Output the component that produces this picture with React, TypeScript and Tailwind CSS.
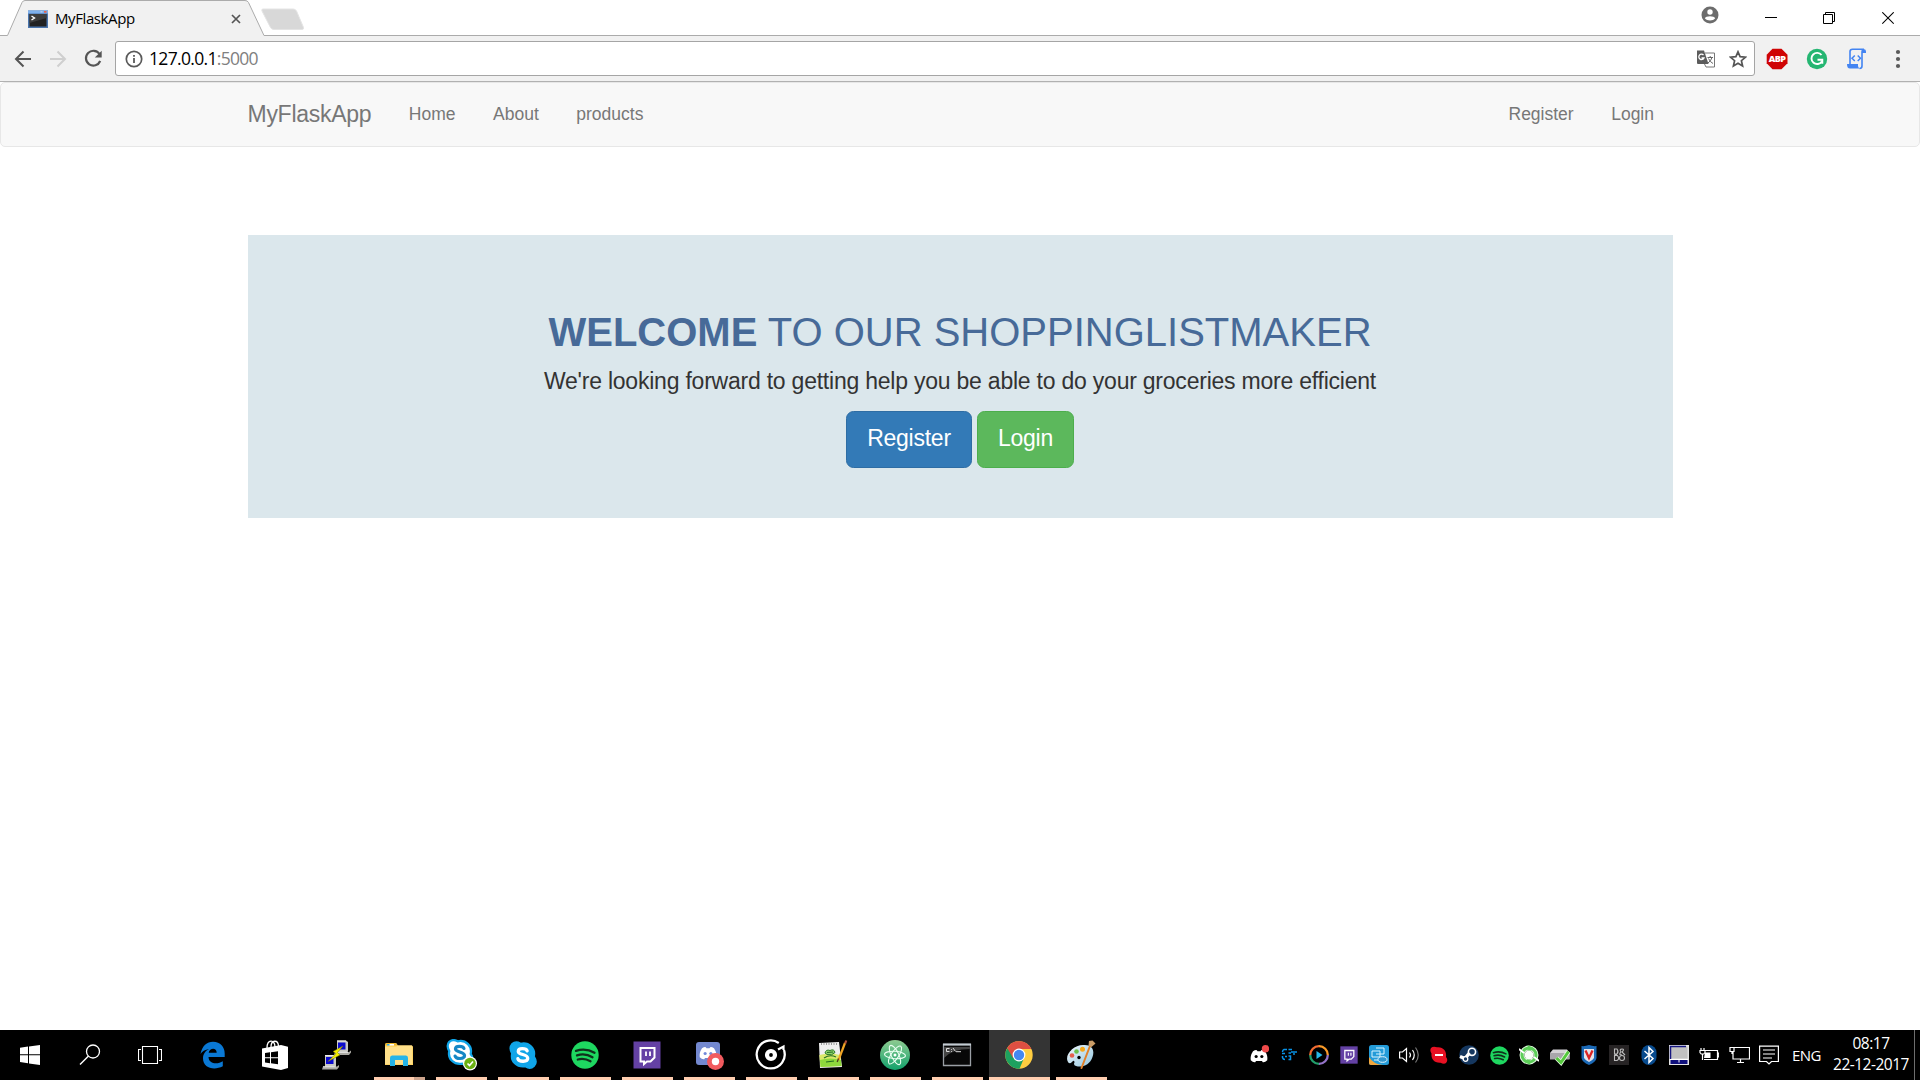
import React from "react";

type IconProps = { size?: number; box?: string; children: React.ReactNode };

function Icon({ size = 30, box, children }: IconProps) {
  return (
    <svg width={size} height={size} viewBox={box ?? `0 0 ${size} ${size}`} fill="none" className="block shrink-0">
      {children}
    </svg>
  );
}

/* ---------- Browser chrome ---------- */

function TabStrip() {
  return (
    <div className="relative flex h-9 items-start bg-white">
      <svg width="1920" height="36" className="absolute inset-0">
        <path d="M0 35.5H7.5L22 2.5Q23 .5 25 .5H245Q247.500 .5 248.500 2.500L264 35.500H1920V36H0Z" fill="#f1f1f1" />
        <path d="M0 35.500H7.500L22 2.500Q23 .5 25 .5H245Q247.500 .5 248.500 2.500L264 35.500H1920" fill="none" stroke="#ababab" />
        <path d="M263 9H293Q295.500 9 296.500 11L303.500 27.500Q304 29.500 302 29.500H274Q271.500 29.500 270.500 27.500L262 11Q261.300 9 263 9Z" fill="#d8d8d8" stroke="#e4e4e4" />
      </svg>
      <div className="relative ml-7 flex h-9 w-[215px] items-center">
        <div className="pt-[3px]">
          <Icon size={20}>
            <rect y=".5" width="20" height="17.500" fill="#4a75ad" />
            <rect y=".5" width="20" height="3" fill="#7eb0ec" />
            <rect x="16" y="1" width="2.500" height="1.700" fill="#e4614f" />
            <rect x="12.500" y="1" width="2" height="1.500" fill="#b5cdf0" />
            <rect x="1.500" y="4" width="17" height="12.500" fill="#222" />
            <path d="M1.500 4h17v4L1.500 13z" fill="#3d3d3d" />
            <path d="M3.500 6l3 2-3 2" stroke="#fff" strokeWidth="1.400" />
          </Icon>
        </div>
        <span className="ml-[7px] w-[80px] whitespace-nowrap font-['Open_Sans',sans-serif] text-[15px] leading-5 tracking-[-0.4px] text-black">MyFlaskApp</span>
        <svg width="10" height="10" className="ml-24 mt-0.5">
          <path d="M1 1l8 8M9 1L1 9" stroke="#555" strokeWidth="1.700" />
        </svg>
      </div>
      <div className="relative ml-auto flex h-9 items-center">
        <div className="mr-[46px] -mt-[6px]">
          <Icon size={18}>
            <circle cx="9" cy="9" r="8.500" fill="#6c6c6c" />
            <circle cx="9" cy="6" r="2.700" fill="#fff" />
            <path d="M3.800 12.300C4.500 9.600 13.500 9.600 14.200 12.300C12 15.300 6 15.300 3.800 12.300Z" fill="#fff" />
          </Icon>
        </div>
        <svg width="12" height="13" className="mr-[46px]"><path d="M0 5.500h12" stroke="#000" /></svg>
        <svg width="12" height="13" className="mr-[47px]">
          <path d="M.5 2.500h9v9h-9zM2.500 2.500v-2h9v9h-2" stroke="#000" fill="none" />
        </svg>
        <svg width="12" height="13" className="mr-[26px]"><path d="M.3 .3l11.400 11.400M11.700 .3L.3 11.700" stroke="#000" strokeWidth="1.100" /></svg>
      </div>
    </div>
  );
}

function Toolbar() {
  return (
    <div className="flex h-[46px] items-center border-b border-[#b1b1b1] bg-[#f1f1f1]">
      <svg width="115" height="45" className="shrink-0" fill="none" strokeWidth="2">
        <path d="M31 23H16M23.500 15.500L16 23L23.500 30.500" stroke="#555" />
        <path d="M50 23H65M57.500 15.500L65 23L57.500 30.500" stroke="#cfcfcf" />
        <path d="M99.500 18A7.400 7.400 0 1 0 100.200 25" stroke="#555" strokeWidth="2.200" />
        <path d="M101.700 14.800V21.600H94.800Z" fill="#555" />
      </svg>
      <div className="flex h-[35px] w-[1640px] shrink-0 items-center rounded-[3px] border border-[#a5a5a5] bg-white">
        <div className="ml-[8.500px]">
          <Icon size={18}>
            <circle cx="9" cy="9" r="7.700" stroke="#5a5a5a" strokeWidth="1.700" />
            <path d="M9 8v5M9 5v1.800" stroke="#5a5a5a" strokeWidth="1.800" />
          </Icon>
        </div>
        <span className="ml-[6.500px] whitespace-nowrap pb-0.5 font-['Open_Sans',sans-serif] text-[17.500px] leading-6 tracking-[-0.680px] text-black">
          127.0.0.1<span className="text-[#808080]">:5000</span>
        </span>
        <div className="ml-auto mr-[13px]">
          <Icon size={20}>
            <path d="M9 4h9.500v14H10L8 14" stroke="#777" strokeWidth="1" fill="#fff" />
            <path d="M1 1.500h7L12.500 15H2q-1 0-1-1Z" fill="#5c5c5c" />
            <path d="M7.500 6A2.700 2.700 0 1 0 8 9H5.500" stroke="#fff" strokeWidth="1.300" />
            <path d="M11.500 8.500H17M14.200 7v1.500M16 8.500Q15 12 12 14M12.500 9.500Q14 13 17 14.500" stroke="#666" />
          </Icon>
        </div>
        <div className="mr-[7px]">
          <Icon size={18}>
            <path d="M9 1.800L11.100 6.700L16.400 7.200L12.400 10.700L13.600 16L9 13.200L4.400 16L5.600 10.700L1.600 7.200L6.900 6.700Z" stroke="#555" strokeWidth="1.700" />
          </Icon>
        </div>
      </div>
      <div className="ml-[11px] flex items-center">
        <div className="grid">
          <div className="col-start-1 row-start-1">
            <Icon size={22}>
              <path d="M6.500 .7h9L21.500 6.700v8.500l-6 6h-9L.7 15.200V6.700Z" fill="#cf0404" />
            </Icon>
          </div>
          <span className="col-start-1 row-start-1 place-self-center font-['Open_Sans',sans-serif] text-[9px] font-extrabold leading-[14px] tracking-[-0.6px] text-white">ABP</span>
        </div>
        <div className="ml-[18px]">
          <Icon size={22}>
            <circle cx="11" cy="11" r="10.200" fill="#25b672" />
            <path d="M15.500 7A5.600 5.600 0 1 0 15.800 13.500M11.500 11.800h4.800v4" stroke="#fff" strokeWidth="1.900" />
          </Icon>
        </div>
        <div className="ml-[18px]">
          <Icon size={22}>
            <path d="M4 16V3.500Q4 1.200 6.500 1.200H18Q16 1.600 16 4V18Q16 20.500 13.500 20.500" stroke="#4384f2" strokeWidth="1.600" />
            <path d="M16 5h4V3.500Q20 1.200 18 1.200Q16 1.500 16 5ZM1 16H12Q11.500 20.500 15 20.500H4Q1 20.500 1 16Z" fill="#4384f2" />
            <path d="M8.800 7.500L6 10.200L8.800 13M11.700 7.500L14.500 10.200L11.700 13" stroke="#4384f2" strokeWidth="1.500" />
          </Icon>
        </div>
        <svg width="6" height="20" className="ml-[26.500px]" fill="#5a5a5a">
          <circle cx="3" cy="3" r="2.100" /><circle cx="3" cy="10" r="2.100" /><circle cx="3" cy="17" r="2.100" />
        </svg>
      </div>
    </div>
  );
}

/* ---------- Page ---------- */

function Page() {
  return (
    <main className="flex-1 bg-white font-['Liberation_Sans',Arial,sans-serif]">
      <nav className="flex h-[65px] items-center rounded-[5px] border border-[#e7e7e7] bg-[#f8f8f8] pl-[246.500px] pr-[265px] text-[17.500px] leading-[25px] text-[#777]">
        <a className="text-[23px] tracking-[-0.270px]">MyFlaskApp</a>
        <a className="ml-[37.500px]">Home</a>
        <a className="ml-[37.500px]">About</a>
        <a className="ml-[37.500px]">products</a>
        <a className="ml-auto">Register</a>
        <a className="ml-[37.500px]">Login</a>
      </nav>
      <section className="mx-auto mt-[88px] flex h-[283px] w-[1425px] flex-col items-center bg-[#dbe7ec] pt-[73px]">
        <h1 className="whitespace-nowrap text-[40px] leading-[48px] text-[#476a98]">
          <strong className="font-bold">WELCOME</strong> TO OUR SHOPPINGLISTMAKER
        </h1>
        <p className="mt-[9px] whitespace-nowrap text-[23px] leading-8 tracking-[-0.225px] text-[#333]">
          We're looking forward to getting help you be able to do your groceries more efficient
        </p>
        <div className="mt-[14px] flex gap-[5px] text-[23px] tracking-[-0.250px] text-white">
          <button className="h-[57px] w-[126px] rounded-[7.500px] border border-[#2e6da4] bg-[#337ab7] pb-[3px]">Register</button>
          <button className="h-[57px] w-[97px] rounded-[7.500px] border border-[#4cae4c] bg-[#5cb85c] pb-[3px]">Login</button>
        </div>
      </section>
    </main>
  );
}

/* ---------- Taskbar icons ---------- */

const windows = (
  <Icon size={20}>
    <path d="M0 2.800L8 1.600V9.300H0ZM9 1.500L20 0V9.300H9ZM0 10.300H8V18.200L0 17.100ZM9 10.300H20V20L9 18.400Z" fill="#fff" />
  </Icon>
);
const search = (
  <Icon size={22}>
    <circle cx="14" cy="7.500" r="6.500" stroke="#fff" strokeWidth="1.300" />
    <path d="M9.500 12L1 20.500" stroke="#fff" strokeWidth="1.500" />
  </Icon>
);
const taskView = (
  <Icon size={24}>
    <path d="M4.500 3.500h15v17h-15zM3 6.500H.5v11H3M21 6.500h2.500v11H21" stroke="#fff" strokeWidth="1.100" />
  </Icon>
);
const edge = (
  <Icon size={28}>
    <path d="M1.500 13C3 5 8 .8 14 .8C21.500 .8 25.700 6 25.700 12.500V16H9.500C9.800 23.500 19 23.500 23.800 20.300V25.300C15 29.800 4 27 4 17.500C4 13 6.500 9.800 10.200 8C6 8.500 3 10.500 1.500 13ZM9.700 11.800H17.700C17.800 6.300 10.500 6.700 9.700 11.800Z" fill="#0a78d4" fillRule="evenodd" />
  </Icon>
);
const store = (
  <Icon size={30}>
    <path d="M7 8C7 -1 15 -1 15 7M11 7C11 -.5 18 -.5 18.500 6" stroke="#fff" strokeWidth="1.300" />
    <path d="M2 8.500L21 5V30L2 26.500Z" fill="#fff" />
    <path d="M21 5L28 6.800V28L21 30Z" fill="#fff" />
    <path d="M5 13l5-.7v5H5zM11 12.200l7-1v6.100h-7zM5 18.300h5v4.900l-5-.7zM11 18.300h7v6l-7-1z" fill="#000" />
  </Icon>
);

function Computer({ x, y }: { x: number; y: number }) {
  return (
    <g transform={`translate(${x} ${y})`}>
      <path d="M3 0H12L14 1.500V11L12 12H3Z" fill="#c9c9c3" />
      <path d="M4 2h7.500v7H4z" fill="#0b0bd0" />
      <path d="M1 11.500H15L17 10V12L15 14.500H0Z" fill="#aaa9a3" />
      <path d="M1 11.800H14M3 .5H12" stroke="#eee" />
    </g>
  );
}
const putty = (
  <Icon size={30}>
    <Computer x={12} y={0.5} />
    <Computer x={0} y={15} />
    <path d="M21 6L11 11.500L14 13.500L6 21.500L18 15L15.500 12.500Z" fill="#f5ef00" stroke="#77740a" strokeWidth=".5" />
  </Icon>
);
const explorer = (
  <Icon size={30}>
    <path d="M1 5Q1 3 3 3H12L14 5.500H27.500Q29 5.500 29 7V25H1Z" fill="#ffd566" />
    <path d="M1 4.500Q1 3 3 3H12L13.500 5.500H1Z" fill="#eab42b" />
    <path d="M3 4.800h7" stroke="#fff" strokeWidth="1.600" /><path d="M3 4.800h2.500" stroke="#35aadd" strokeWidth="1.600" />
    <path d="M1 7H12L14 5.500H28V24H1Z" fill="#ffe08a" />
    <path d="M6 26V18Q6 15.500 8 15.500H22Q24 15.500 24 18V26H19V20H11V26Z" fill="#24b4e8" />
  </Icon>
);

function Skype({ inverted }: { inverted?: boolean }) {
  return (
    <>
      <path d="M3 3Q7 -.5 12 2.500C21 .5 28 8 26 16Q30 22 26 26Q22 30 17 26.500C8 28 1 21 3 13Q-.5 7 3 3Z" fill={inverted ? "#fff" : "#10a5e8"} stroke="#10a5e8" strokeWidth={inverted ? 2.4 : 1.6} />
      <path d="M18.800 10.200C17.800 7.400 9.600 6.800 9.600 10.800C9.600 14.600 19.400 13.400 19.400 17.800C19.400 22 10.300 21.900 9.200 18.300" stroke={inverted ? "#1687c5" : "#fff"} strokeWidth="3.400" strokeLinecap="round" />
    </>
  );
}
const skypeOnline = (
  <Icon size={32}>
    <g transform="translate(1.500 0) scale(.93)"><Skype inverted /></g>
    <circle cx="25" cy="24.500" r="7" fill="#fff" />
    <circle cx="25" cy="24.500" r="5.800" fill="#6bb113" />
    <path d="M22.500 24.500l2 2 3.500-4" stroke="#fff" strokeWidth="1.700" />
  </Icon>
);
const skype = <Icon size={28} box="0 0 29 29"><Skype /></Icon>;

function Spotify() {
  return (
    <>
      <circle cx="14" cy="14" r="13.700" fill="#1ed760" />
      <path d="M5 9.800C11 8 18 8.600 23.500 11.700M6 14.300C11 12.800 17 13.500 21.500 16.200M6.800 18.500C11 17.400 15.500 18 19.500 20.300" stroke="#10301c" strokeWidth="2.300" strokeLinecap="round" />
    </>
  );
}
const spotify = <Icon size={28}><Spotify /></Icon>;

function Twitch() {
  return (
    <>
      <path d="M.5 .5h27v27H.5z" fill="#6441a4" />
      <path d="M7.500 7H21.500V16.500L17.500 20.500H14L11 23V20.500H7.500Z" stroke="#fff" strokeWidth="2" />
      <path d="M13 10.500v4.500M17 10.500v4.500" stroke="#fff" strokeWidth="1.800" />
    </>
  );
}
const twitch = <Icon size={28}><Twitch /></Icon>;

function DiscordFace({ fill, eye }: { fill: string; eye: string }) {
  return (
    <>
      <path d="M4 3Q7 1 9 1.500L10 3H14L15 1.500Q17 1 20 3Q24 9 23 15Q20 18 17 17.500L16 16H8L7 17.500Q4 18 1 15Q0 9 4 3Z" fill={fill} />
      <circle cx="8.200" cy="10" r="2.100" fill={eye} /><circle cx="15.800" cy="10" r="2.100" fill={eye} />
    </>
  );
}
const discord = (
  <Icon size={30}>
    <rect x="2" y="2" width="24" height="23" rx="3" fill="#7388cf" />
    <g transform="translate(5 6) scale(.75)"><DiscordFace fill="#fff" eye="#7289da" /></g>
    <circle cx="21.500" cy="21.500" r="8.500" fill="#f15a5e" />
    <circle cx="21.500" cy="21.500" r="3.700" fill="#fff" />
  </Icon>
);
const groove = (
  <Icon size={32}>
    <path d="M23.800 4A14 14 0 1 0 29 11" stroke="#fff" strokeWidth="2.300" />
    <circle cx="16" cy="16" r="4" stroke="#fff" strokeWidth="4.200" />
    <path d="M23 10.500L28.500 7.500V11" stroke="#fff" strokeWidth="2.200" />
  </Icon>
);
const notepadPlus = (
  <Icon size={30}>
    <path d="M1 3L21 2L24 27L2 28Z" fill="#eee" />
    <path d="M1.300 15Q12 12 22 15L23.500 26L2.500 27Z" fill="#d9e86a" />
    <path d="M2 20Q12 17 23 20L23.500 26L2.500 27Z" fill="#8ed83c" />
    <path d="M3 4h17" stroke="#999" strokeWidth="2" strokeDasharray="1 1.500" />
    <path d="M7 13Q8 9 12 10.500Q16 8.500 17 12.500Q14 16 9 14.500Z" stroke="#2d7a2a" fill="#8fd168" />
    <path d="M9 12.500l6-.5M6 18q6-4 12-1M8 22l8-1" stroke="#226d22" strokeWidth="1.100" />
    <path d="M27 3L20.500 20" stroke="#f0a424" strokeWidth="2.200" /><path d="M28.200 .5l-1 3" stroke="#b5523b" strokeWidth="2.200" /><path d="M20.500 18.500l-1.300 3.500" stroke="#503820" strokeWidth="1.300" />
  </Icon>
);
const atom = (
  <Icon size={32}>
    <defs><linearGradient id="atomFill" x1="0" y1="0" x2="0" y2="1"><stop stopColor="#8ecb91" /><stop offset="1" stopColor="#12a26b" /></linearGradient></defs>
    <circle cx="16" cy="16" r="15" fill="url(#atomFill)" />
    <g stroke="#eafff2" strokeWidth="1.100">
      <ellipse cx="16" cy="16" rx="10.500" ry="3.700" transform="rotate(4 16 16)" />
      <ellipse cx="16" cy="16" rx="10.500" ry="3.700" transform="rotate(64 16 16)" />
      <ellipse cx="16" cy="16" rx="10.500" ry="3.700" transform="rotate(124 16 16)" />
    </g>
    <circle cx="16" cy="16" r="1.500" fill="#fff" />
  </Icon>
);
const terminal = (
  <Icon size={30}>
    <path d="M1.500 4.500h27v21h-27z" fill="#080808" stroke="#9a9fa5" strokeWidth="1.300" />
    <path d="M2 7H28V9Q10 9 2 18Z" fill="#444" />
    <path d="M1 4.500H29" stroke="#c3cbd2" strokeWidth="2" />
    <path d="M7.500 8.500H4.500v3h3M9.500 9v.8M9.500 11v.8M11 8l2.500 3.500M14 11.700h5" stroke="#ddd" />
  </Icon>
);
const chrome = (
  <Icon size={28}>
    <circle cx="14" cy="14" r="13.700" fill="#ffcd40" />
    <path d="M14 14L2.200 7.200A13.700 13.700 0 0 0 14.500 27.700L19 17Z" fill="#1da15f" />
    <path d="M2.200 7A13.700 13.700 0 0 1 26.300 8H14L8 17Z" fill="#dd4f42" />
    <circle cx="14" cy="14" r="6.400" fill="#fff" /><circle cx="14" cy="14" r="5.200" fill="#4688f1" />
  </Icon>
);
const paint = (
  <Icon size={30}>
    <defs><linearGradient id="paletteFill" x1="0" y1="0" x2="1" y2="1"><stop stopColor="#f1f8fc" /><stop offset="1" stopColor="#93c6df" /></linearGradient></defs>
    <path d="M1.500 21C-1 14 8 5 17 5C26 4 29 10 26.500 17C24 25 16 28 10 26Q7 25 8.500 22.500Q8.500 19.500 6 22Q3 25 1.500 21Z" fill="url(#paletteFill)" />
    <circle cx="6" cy="15.500" r="2.300" fill="#e5604e" /><circle cx="10.500" cy="11.500" r="2.300" fill="#6cc24c" /><circle cx="16.500" cy="9.300" r="2.500" fill="#f7a91b" /><circle cx="13" cy="17.500" r="1.700" fill="#000" />
    <path d="M24 6L15.500 28" stroke="#e28028" strokeWidth="2" strokeLinecap="round" />
    <path d="M23 1L26.500 .5L29.500 3.500L25.500 7L22.500 5.500Z" fill="#c99c67" />
  </Icon>
);

type Task = { name: string; icon: React.ReactNode; bar?: "open" | "stacked" | "active" };

const tasks: Task[] = [
  { name: "Edge", icon: edge },
  { name: "Store", icon: store },
  { name: "PuTTY", icon: putty },
  { name: "File Explorer", icon: explorer, bar: "stacked" },
  { name: "Skype for desktop", icon: skypeOnline, bar: "open" },
  { name: "Skype", icon: skype, bar: "open" },
  { name: "Spotify", icon: spotify, bar: "open" },
  { name: "Twitch", icon: twitch, bar: "open" },
  { name: "Discord", icon: discord, bar: "open" },
  { name: "Groove", icon: groove, bar: "open" },
  { name: "Notepad++", icon: notepadPlus, bar: "open" },
  { name: "Atom", icon: atom, bar: "open" },
  { name: "Command Prompt", icon: terminal, bar: "open" },
  { name: "Chrome", icon: chrome, bar: "active" },
  { name: "Paint", icon: paint, bar: "open" },
];

/* ---------- Notification area ---------- */

const tray: React.ReactNode[] = [
  <Icon size={20}><g transform="translate(1 4) scale(.75)"><DiscordFace fill="#fff" eye="#000" /></g><circle cx="16.500" cy="3.700" r="3.700" fill="#f04a4a" /></Icon>,
  <Icon size={20}><path d="M8 4.500H5Q3.500 5 3.500 7M3 8.500H6M3.500 11V12.500Q4 14.500 6 14.500M6 11.500H8M9.500 4.500H13M9.500 8H12M9.500 11h2v3.500h-2M12 7H18M14 9H16" stroke="#0892e6" strokeWidth="1.500" /></Icon>,
  <Icon size={20}>
    <path d="M10 1.200A8.800 8.800 0 0 1 18.800 10" stroke="#fa9a28" strokeWidth="2.300" /><path d="M18.800 10A8.800 8.800 0 0 1 10 18.800" stroke="#9473c8" strokeWidth="2.300" /><path d="M10 18.800A8.800 8.800 0 0 1 1.200 10" stroke="#219d6a" strokeWidth="2.300" /><path d="M1.200 10A8.800 8.800 0 0 1 10 1.200" stroke="#f26c31" strokeWidth="2.300" />
    <path d="M7.500 6L13.500 10L7.500 14Z" fill="#27b9e8" />
  </Icon>,
  <Icon size={18} box="0 0 28 28"><Twitch /></Icon>,
  <Icon size={20}><rect width="20" height="20" rx="2.500" fill="#239bd8" /><path d="M0 12Q4 19 14 20H2Q0 20 0 18Z" fill="#f3a63b" /><path d="M3 6h8v6H3zM7 3h8v6H7M5 15h5" stroke="#d9f4ff" /><ellipse cx="13.500" cy="14.500" rx="4.500" ry="2.800" stroke="#e5f6ff" fill="#3298cf" /></Icon>,
  <Icon size={21}><path d="M.6 7H3.500L7.500 3.500V16.500L3.500 13H.6Z" stroke="#fff" strokeWidth="1.200" /><path d="M10.500 7.500Q12.500 10 10.500 12.500M13.500 5Q17 10 13.500 15" stroke="#fff" strokeWidth="1.200" /><path d="M16.500 2.500Q22 10 16.500 17.500" stroke="#777" strokeWidth="1.200" /></Icon>,
  <Icon size={20}><path d="M2 3Q4 .8 8 2.200C14 1.500 18 6 17 12Q19.500 15 17 18Q15 19.500 11.500 17.700C5 18 2 14 2.500 8.500Q.5 5.500 2 3Z" fill="#e81123" /><path d="M6 10h8" stroke="#fff" strokeWidth="2" /></Icon>,
  <Icon size={20}><circle cx="10" cy="10" r="9.800" fill="#15375f" /><path d="M1 11.500L6 13.500L10.500 8" stroke="#fff" strokeWidth="3.500" /><circle cx="13" cy="6.800" r="3.600" stroke="#fff" strokeWidth="1.600" /><circle cx="6.500" cy="14" r="2.300" stroke="#fff" strokeWidth="1.300" fill="#15375f" /></Icon>,
  <Icon size={19} box="0 0 28 28"><Spotify /></Icon>,
  <Icon size={20}>
    <circle cx="10" cy="10" r="7" stroke="#dff8dd" strokeWidth="5" />
    <circle cx="10" cy="10" r="7" stroke="#5cce58" strokeWidth="3" />
    <path d="M8.500 0L15 3.500L9.500 7ZM11.500 20L5 16.500L10.500 13Z" fill="#5cce58" />
    <path d="M0 4L5 8M20 16L15 12" stroke="#fff" strokeWidth="1.800" />
    <circle cx="10" cy="10" r="4.500" fill="#f7fff7" />
  </Icon>,
  <Icon size={21}><path d="M4 4.500H18L20.500 8V14H1V8Z" fill="#d6d3d7" /><path d="M1 8H20.500V14.500H1Z" fill="#a9a6ab" /><path d="M7.500 13L12 17.500L19.500 6.500" stroke="#e9ffe4" strokeWidth="4.500" /><path d="M7.500 13L12 17.500L19.500 6.500" stroke="#55c83d" strokeWidth="3" /></Icon>,
  <Icon size={20}><path d="M2.500 1Q6 1.500 10 0Q14 1.500 17.500 1V13Q17 17 10 20Q3 17 2.500 13Z" fill="#1b69b6" /><path d="M5 4H15V13Q14 15 10 17Q6 15 5 13Z" fill="#e2e4ea" /><path d="M6.500 5.500L10 13L13.500 5.500" stroke="#db2425" strokeWidth="2.300" /></Icon>,
  <Icon size={20}><path d="M0 0h20v20H0z" fill="#272425" /><path d="M5.500 4v5H8Q10 6.500 8 4ZM5.500 10.500v5H8Q11 14 8.500 10.500ZM5.500 10H8M12 7q-2-3 1-3t0 3l3 3m-4-3q-3 3 1 3" stroke="#bbb" strokeWidth="1.100" /><circle cx="13" cy="13" r="2.500" stroke="#bbb" strokeWidth="1.100" /></Icon>,
  <Icon size={20}><rect x="2.500" y="0" width="15" height="20" rx="7.500" fill="#084b8e" /><path d="M5.500 6L14 13.500L10 17.500V2.500L14 6.500L5.500 14" stroke="#fff" strokeWidth="1.500" /></Icon>,
  <Icon size={20}><path d="M0 0h20v20H0z" fill="#e4e4e4" /><path d="M1.500 1.500h17v12h-17z" fill="#c1c1c1" /><path d="M1.500 14V1.500H17" stroke="#161681" strokeWidth="1.500" /><path d="M1.500 15h17v4h-17z" fill="#10107c" /><path d="M1 14.500h18M10 14.500v3" stroke="#fff" /></Icon>,
  <Icon size={20}><path d="M6.500 5.500H18.500V14.500H5M18.500 8h1.300v4h-1.300M2 3v2.500M5 3v2.500M1 5.500h5v2L4.800 9H2.200L1 7.500ZM3.500 9v6" stroke="#fff" strokeWidth="1.200" /><path d="M6 7.500h5.500v5.500H5Z" fill="#fff" /></Icon>,
  <Icon size={21}><path d="M5 2.500H20.500V14H4V7M11.500 14v3M8 17.500h7M1 2.500h4v4H1ZM3 6.500V9" stroke="#fff" strokeWidth="1.200" /></Icon>,
  <Icon size={20}><path d="M.6 1.100H19.400V16.500H12.500L10 19L7.500 16.500H.6Z" stroke="#fff" strokeWidth="1.200" /><path d="M4 5h12M4 9h12M4 13h9" stroke="#fff" strokeWidth="1.200" /></Icon>,
];

function Taskbar() {
  return (
    <footer className="flex h-[50px] shrink-0 bg-black font-['Open_Sans',sans-serif] text-white">
      <div className="flex w-[60px] items-center justify-center">{windows}</div>
      <div className="flex w-[60px] items-center justify-center">{search}</div>
      <div className="flex w-[62px] items-center justify-center pr-0.5">{taskView}</div>
      {tasks.map((t) => (
        <div key={t.name} className="flex w-[62px] flex-col items-center">
          <div className={t.bar === "active" ? "flex h-[47px] w-[61px] items-center justify-center bg-[#343434] pt-[3px]" : "flex h-[47px] items-center pt-[3px]"}>
            {t.icon}
          </div>
          {t.bar === "stacked" && (
            <div className="flex h-[3px] w-[51px]">
              <div className="w-10 bg-[#ffceb0]" />
              <div className="w-[11px] bg-[#cda48d]" />
            </div>
          )}
          {t.bar === "open" && <div className="h-[3px] w-[51px] bg-[#ffceb0]" />}
          {t.bar === "active" && <div className="h-[3px] w-[61px] bg-[#ffceb0]" />}
        </div>
      ))}
      <div className="ml-auto flex">
        {tray.map((icon, i) => (
          <div key={i} className="flex w-[30px] items-center justify-center">{icon}</div>
        ))}
        <div className="flex w-[45px] items-center justify-center text-[15px] tracking-[-0.5px]">ENG</div>
        <div className="flex w-[85px] flex-col items-center justify-center whitespace-nowrap pb-[3px] pr-px text-[15.500px] leading-[21px] tracking-[-0.5px]">
          <span>08:17</span>
          <span>22-12-2017</span>
        </div>
        <div className="mr-[5px] w-px bg-[#6d6d6d]" />
      </div>
    </footer>
  );
}

export default function App() {
  return (
    <div className="flex h-[1080px] w-[1920px] flex-col overflow-hidden bg-white">
      <TabStrip />
      <Toolbar />
      <Page />
      <Taskbar />
    </div>
  );
}
